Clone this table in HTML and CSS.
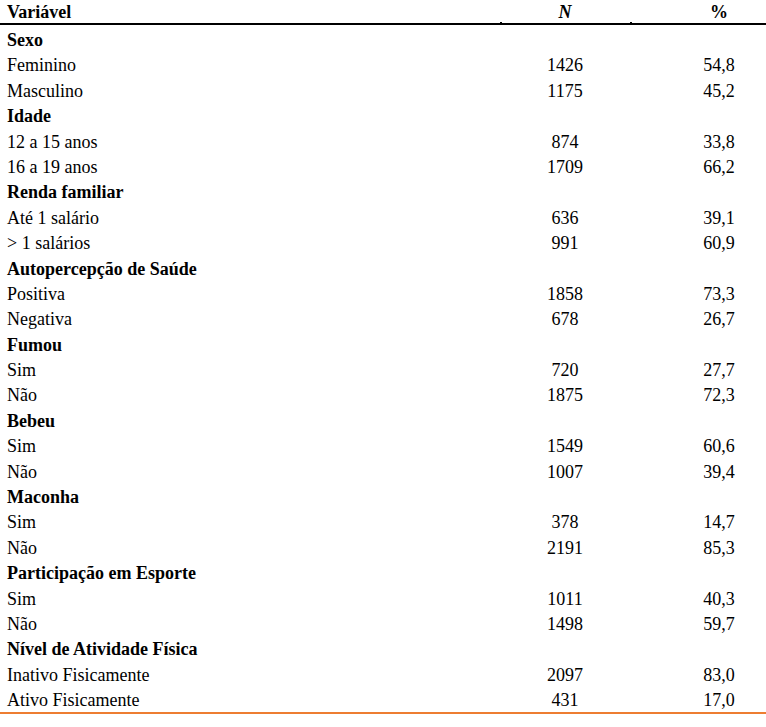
FILE: index.html
```html
<!DOCTYPE html>
<html lang="pt">
<head>
<meta charset="utf-8">
<title>Tabela</title>
<link rel="stylesheet" href="styles.css">
</head>
<body>
<div class="data">
  <div class="row head">
    <div class="lbl">Variável</div>
    <div class="num mark"><i>N</i></div>
    <div class="pct mark">%</div>
  </div>
  <div class="body">
    <div class="row"><div class="lbl grp">Sexo</div><div></div><div></div></div>
    <div class="row"><div class="lbl">Feminino</div><div class="num">1426</div><div class="pct">54,8</div></div>
    <div class="row"><div class="lbl">Masculino</div><div class="num">1175</div><div class="pct">45,2</div></div>
    <div class="row"><div class="lbl grp">Idade</div><div></div><div></div></div>
    <div class="row"><div class="lbl">12 a 15 anos</div><div class="num">874</div><div class="pct">33,8</div></div>
    <div class="row"><div class="lbl">16 a 19 anos</div><div class="num">1709</div><div class="pct">66,2</div></div>
    <div class="row"><div class="lbl grp">Renda familiar</div><div></div><div></div></div>
    <div class="row"><div class="lbl">Até 1 salário</div><div class="num">636</div><div class="pct">39,1</div></div>
    <div class="row"><div class="lbl">&gt; 1 salários</div><div class="num">991</div><div class="pct">60,9</div></div>
    <div class="row"><div class="lbl grp">Autopercepção de Saúde</div><div></div><div></div></div>
    <div class="row"><div class="lbl">Positiva</div><div class="num">1858</div><div class="pct">73,3</div></div>
    <div class="row"><div class="lbl">Negativa</div><div class="num">678</div><div class="pct">26,7</div></div>
    <div class="row"><div class="lbl grp">Fumou</div><div></div><div></div></div>
    <div class="row"><div class="lbl">Sim</div><div class="num">720</div><div class="pct">27,7</div></div>
    <div class="row"><div class="lbl">Não</div><div class="num">1875</div><div class="pct">72,3</div></div>
    <div class="row"><div class="lbl grp">Bebeu</div><div></div><div></div></div>
    <div class="row"><div class="lbl">Sim</div><div class="num">1549</div><div class="pct">60,6</div></div>
    <div class="row"><div class="lbl">Não</div><div class="num">1007</div><div class="pct">39,4</div></div>
    <div class="row"><div class="lbl grp">Maconha</div><div></div><div></div></div>
    <div class="row"><div class="lbl">Sim</div><div class="num">378</div><div class="pct">14,7</div></div>
    <div class="row"><div class="lbl">Não</div><div class="num">2191</div><div class="pct">85,3</div></div>
    <div class="row"><div class="lbl grp">Participação em Esporte</div><div></div><div></div></div>
    <div class="row"><div class="lbl">Sim</div><div class="num">1011</div><div class="pct">40,3</div></div>
    <div class="row"><div class="lbl">Não</div><div class="num">1498</div><div class="pct">59,7</div></div>
    <div class="row"><div class="lbl grp">Nível de Atividade Física</div><div></div><div></div></div>
    <div class="row"><div class="lbl">Inativo Fisicamente</div><div class="num">2097</div><div class="pct">83,0</div></div>
    <div class="row last"><div class="lbl">Ativo Fisicamente</div><div class="num">431</div><div class="pct">17,0</div></div>
  </div>
</div>
</body>
</html>
```
FILE: styles.css
```css
html, body {
  margin: 0;
  padding: 0;
  background: #ffffff;
}

body {
  font-family: "Liberation Serif", "Times New Roman", serif;
  font-size: 18px;
  color: #000000;
}

.data {
  width: 766px;
}

.row {
  display: grid;
  grid-template-columns: 500px 130px 136px;
  height: 25.4px;
  line-height: 25.4px;
  white-space: nowrap;
}

.row.head {
  height: 23px;
  line-height: 24px;
  font-weight: bold;
  border-bottom: 2px solid #000000;
}

.row.head i {
  font-style: italic;
}

.body {
  padding-top: 3px;
  border-bottom: 2px solid #ed7d31;
}

.row.last {
  height: 24px;
}

.lbl {
  padding-left: 7px;
}

.grp {
  font-weight: bold;
}

.num {
  text-align: center;
}

.pct {
  text-align: center;
  padding-left: 42px;
}

.mark {
  position: relative;
}

.mark::before {
  content: "";
  position: absolute;
  left: 0;
  bottom: 0;
  width: 2px;
  height: 2px;
  background: #000000;
}
```
